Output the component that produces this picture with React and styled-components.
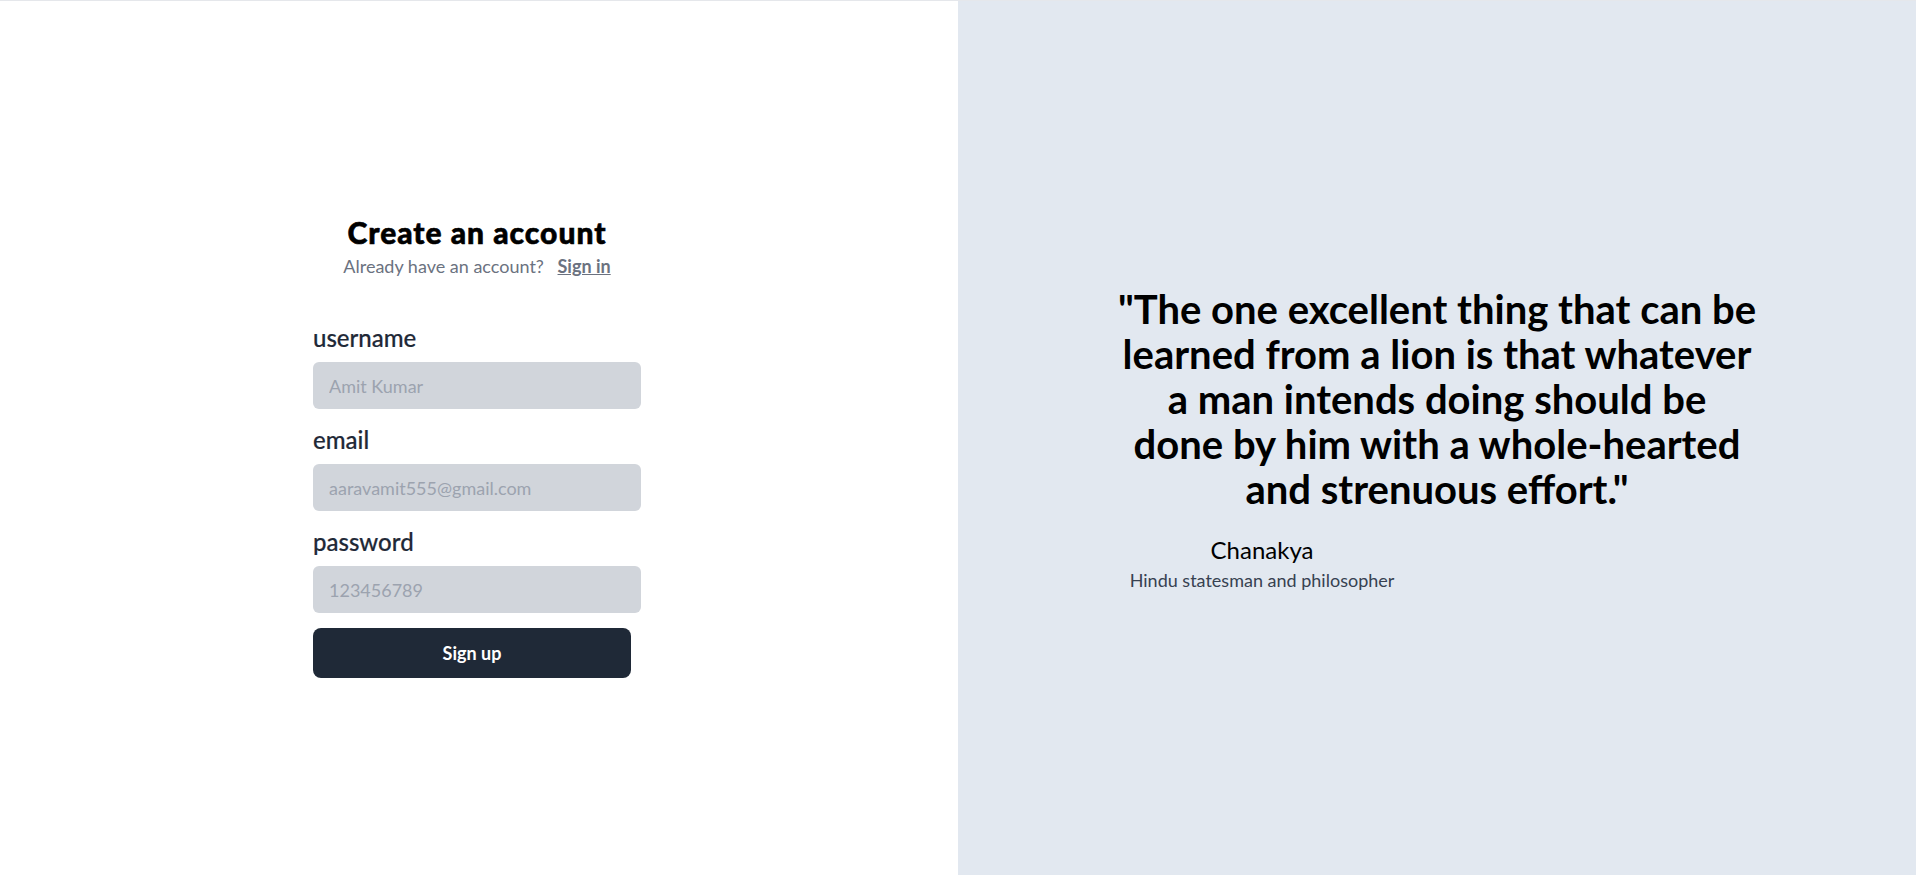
import styled, { createGlobalStyle } from "styled-components";

const GlobalStyle = createGlobalStyle`
  *, *::before, *::after {
    box-sizing: border-box;
  }
  html, body {
    margin: 0;
    padding: 0;
  }
  body {
    font-family: Lato, "Open Sans", sans-serif;
    color: #000;
    background: #fff;
  }
`;

const fields = [
  { id: "username", label: "username", placeholder: "Amit Kumar" },
  { id: "email", label: "email", placeholder: "aaravamit555@gmail.com" },
  { id: "password", label: "password", placeholder: "123456789" },
];

const quoteLines = [
  "\"The one excellent thing that can be",
  "learned from a lion is that whatever",
  "a man intends doing should be",
  "done by him with a whole-hearted",
  "and strenuous effort.\"",
];

const App = () => {
  return (
    <>
      <GlobalStyle />
      <Page>
        <FormSide>
          <Card>
            <Header>
              <Title>Create an account</Title>
              <Subtitle>
                Already have an account? <SignInLink href="#">Sign in</SignInLink>
              </Subtitle>
            </Header>
            <Form onSubmit={(e) => e.preventDefault()}>
              {fields.map((f) => (
                <Field key={f.id}>
                  <Label htmlFor={f.id}>{f.label}</Label>
                  <Input id={f.id} type="text" placeholder={f.placeholder} />
                </Field>
              ))}
              <SubmitButton type="submit">Sign up</SubmitButton>
            </Form>
          </Card>
        </FormSide>
        <QuoteSide>
          <QuoteBlock>
            <Quote>
              {quoteLines.map((line, i) => (
                <span key={i}>
                  {line}
                  {i < quoteLines.length - 1 && <br />}
                </span>
              ))}
            </Quote>
            <Author>
              <AuthorName>Chanakya</AuthorName>
              <AuthorRole>Hindu statesman and philosopher</AuthorRole>
            </Author>
          </QuoteBlock>
        </QuoteSide>
      </Page>
    </>
  );
};

const Page = styled.main`
  display: grid;
  grid-template-columns: 1fr 1fr;
  height: 100vh;
  border-top: 1px solid #e5e7eb;
`;

const FormSide = styled.section`
  display: flex;
  align-items: center;
  justify-content: center;
  padding: 16px 4px 0 0;
  background: #fff;
`;

const Card = styled.div`
  width: 328px;
  display: flex;
  flex-direction: column;
`;

const Header = styled.div`
  display: flex;
  flex-direction: column;
  align-items: center;
  text-align: center;
`;

const Title = styled.h1`
  margin: 0;
  font-size: 30px;
  line-height: 36px;
  font-weight: 900;
  letter-spacing: 1px;
  -webkit-text-stroke: 0.6px #000;
  color: #000;
`;

const Subtitle = styled.p`
  margin: 2px 0 0;
  font-size: 18px;
  line-height: 28px;
  color: #6b7280;
`;

const SignInLink = styled.a`
  margin-left: 9px;
  color: #6b7280;
  font-weight: 700;
  text-decoration: underline;
`;

const Form = styled.form`
  margin-top: 42px;
  display: flex;
  flex-direction: column;
  gap: 15px;
`;

const Field = styled.div`
  display: flex;
  flex-direction: column;
  gap: 8px;
`;

const Label = styled.label`
  font-size: 24px;
  line-height: 32px;
  font-weight: 500;
  color: #1f2937;
  -webkit-text-stroke: 0.2px #1f2937;
`;

const Input = styled.input`
  width: 100%;
  height: 47px;
  padding: 0 16px;
  border: none;
  outline: none;
  border-radius: 6px;
  background: #d1d5db;
  font-family: inherit;
  font-size: 18px;
  color: #111827;

  &::placeholder {
    color: #9ca3af;
  }
`;

const SubmitButton = styled.button`
  width: 318px;
  height: 50px;
  border: none;
  border-radius: 8px;
  background: #1f2937;
  color: #fff;
  font-family: inherit;
  font-size: 18px;
  font-weight: 700;
  cursor: pointer;
`;

const QuoteSide = styled.section`
  display: flex;
  align-items: center;
  justify-content: center;
  padding-top: 5px;
  background: #e2e8f0;
`;

const QuoteBlock = styled.div`
  width: 640px;
  display: flex;
  flex-direction: column;
`;

const Quote = styled.blockquote`
  margin: 0;
  font-size: 40px;
  line-height: 45px;
  font-weight: 700;
  text-align: center;
  color: #000;
`;

const Author = styled.div`
  width: 268px;
  margin: 22px 0 0 11px;
  text-align: center;
  white-space: nowrap;
`;

const AuthorName = styled.p`
  margin: 0;
  font-size: 24px;
  line-height: 32px;
  color: #000;
`;

const AuthorRole = styled.p`
  margin: 0;
  font-size: 18px;
  line-height: 28px;
  color: #374151;
`;

export default App;
